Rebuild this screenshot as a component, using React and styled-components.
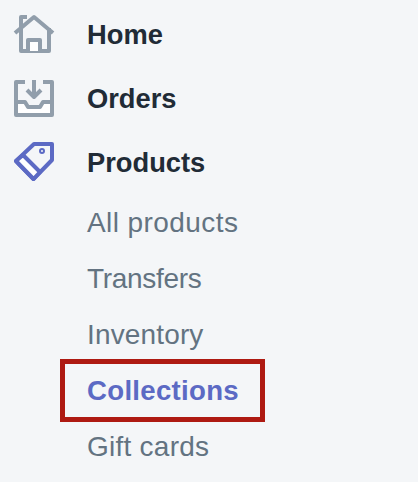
import React from 'react'
import styled, { createGlobalStyle } from 'styled-components'

const GlobalStyle = createGlobalStyle`
  html, body {
    margin: 0;
    padding: 0;
    background: #f4f6f8;
  }
  body {
    font-family: "Liberation Sans", Arial, sans-serif;
    -webkit-font-smoothing: antialiased;
  }
`

const Sidebar = styled.nav`
  width: 418px;
  height: 482px;
  padding-top: 3px;
  box-sizing: border-box;
  overflow: hidden;
  background: #f4f6f8;
`

const MainRow = styled.div`
  display: flex;
  align-items: center;
  height: 64px;
  padding-left: 12px;
  gap: 31px;
  font-size: 27.3px;
  font-weight: 700;
  color: #212b36;
`

const Icon = styled.svg`
  width: 44px;
  height: 44px;
  flex: none;
  margin-top: -2px;
  fill: none;
  stroke: ${(p) => (p.$active ? '#5c6ac4' : '#919eab')};
  stroke-width: 4;
  stroke-linejoin: round;
`

const IconFill = styled.path`
  fill: #ffffff;
`

const SubList = styled.div`
  display: flex;
  flex-direction: column;
  padding-left: 87px;
`

const SubRow = styled.div`
  display: flex;
  align-items: center;
  height: 56px;
  font-size: ${(p) => (p.$active ? '27.6px' : '28px')};
  letter-spacing: ${(p) => p.$spacing}px;
  color: ${(p) => (p.$active ? '#5c6ac4' : '#637381')};
  font-weight: ${(p) => (p.$active ? 700 : 400)};
`

const Label = styled.span`
  position: relative;
`

const Highlight = styled.span`
  position: absolute;
  left: -27px;
  right: -26px;
  top: -16px;
  bottom: -15px;
  border: 5px solid #ae1a12;
`

const HomeIcon = () => (
  <Icon viewBox="0 0 44 44">
    <path d="M3 21 L22 5 L41 21" />
    <path d="M9 16 V39 H37 V16" />
    <path d="M9 16 V5 H15" />
    <IconFill d="M16 39 V28 H28 V39" />
  </Icon>
)

const OrdersIcon = () => (
  <Icon viewBox="0 0 44 44">
    <IconFill stroke="none" d="M4 26 H13 L16 31 H28 L31 26 H40 V39 H4 Z" />
    <path d="M13 6 H4 V39 H40 V6 H31" />
    <path d="M22 4 V20" />
    <path d="M15 14 L22 21 L29 14" />
    <path d="M4 26 H13 L16 31 H28 L31 26 H40" />
  </Icon>
)

const TagIcon = () => (
  <Icon viewBox="0 0 44 44" $active>
    <path d="M22 4 H40 V20 L21.5 39 L4 21 Z" />
    <IconFill d="M11 15 L28 32 L21.5 39 L4 21 Z" />
    <circle cx="30" cy="11" r="1" />
  </Icon>
)

const subItems = [
  { label: 'All products', spacing: 0.42 },
  { label: 'Transfers', spacing: -0.3 },
  { label: 'Inventory', spacing: 0.15 },
  { label: 'Collections', spacing: 0.3, active: true },
  { label: 'Gift cards', spacing: 0.25 },
]

export default function App() {
  return (
    <Sidebar>
      <GlobalStyle />
      <MainRow><HomeIcon />Home</MainRow>
      <MainRow><OrdersIcon />Orders</MainRow>
      <MainRow><TagIcon />Products</MainRow>
      <SubList>
        {subItems.map((item) => (
          <SubRow key={item.label} $active={item.active} $spacing={item.spacing}>
            <Label>
              {item.label}
              {item.active && <Highlight />}
            </Label>
          </SubRow>
        ))}
      </SubList>
    </Sidebar>
  )
}
